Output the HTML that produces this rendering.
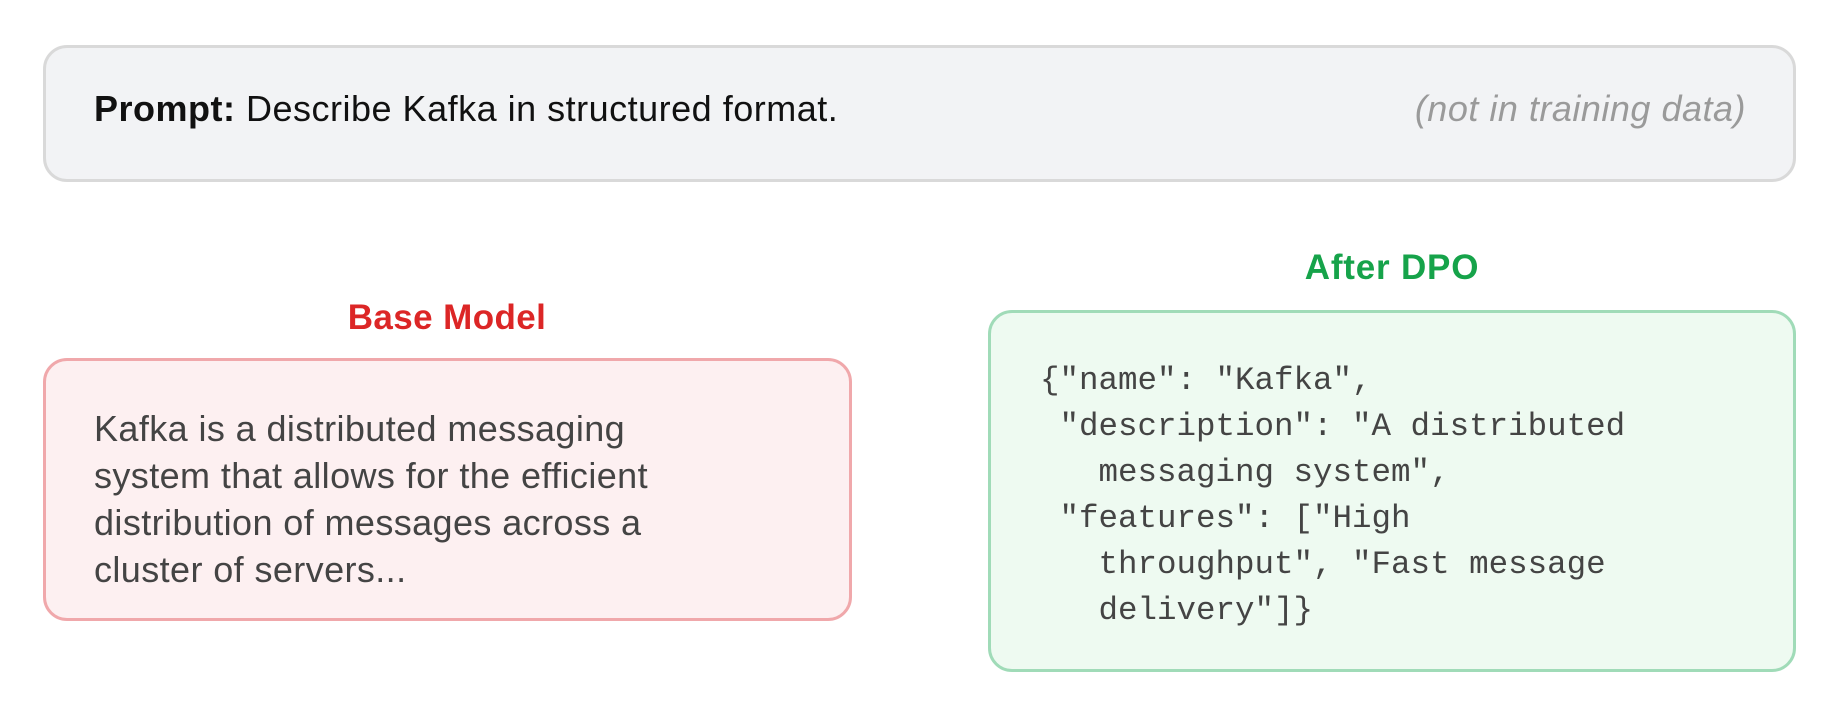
<!DOCTYPE html>
<html><head><meta charset="utf-8"><style>
body{margin:0;width:1841px;height:715px;background:#fff;position:relative;overflow:hidden;font-family:"Liberation Sans",sans-serif}
.box{position:absolute;box-sizing:border-box;border:3px solid;border-radius:24px}
.t{position:absolute;white-space:pre;line-height:1}
</style></head><body>
<div class="box" style="left:43px;top:45px;width:1753px;height:137px;background:#f2f3f5;border-color:#d9d9d9"></div>
<div class="t" style="left:94px;top:91px;font-size:36px;color:#111;letter-spacing:0.5px"><b>Prompt:</b> Describe Kafka in structured format.</div>
<div class="t" style="right:95px;top:91px;font-size:36px;color:#9a9a9a;font-style:italic;letter-spacing:0.5px">(not in training data)</div>

<div class="t" style="left:447px;top:300px;transform:translateX(-50%);font-size:35px;font-weight:bold;color:#dc2626;letter-spacing:0.4px">Base Model</div>
<div class="box" style="left:43px;top:358px;width:809px;height:263px;background:#fdf0f1;border-color:#f0a8ab"></div>
<div class="t" style="left:94px;top:405px;font-size:36px;line-height:47px;color:#444;letter-spacing:0.4px">Kafka is a distributed messaging
system that allows for the efficient
distribution of messages across a
cluster of servers...</div>

<div class="t" style="left:1392px;top:250px;transform:translateX(-50%);font-size:35px;font-weight:bold;color:#16a34a;letter-spacing:0.8px">After DPO</div>
<div class="box" style="left:988px;top:310px;width:808px;height:362px;background:#eefaf1;border-color:#a0dbb8"></div>
<div class="t" style="left:1040px;top:358px;font-family:'Liberation Mono',monospace;font-size:32.5px;line-height:46px;color:#444">{"name": "Kafka",
 "description": "A distributed
   messaging system",
 "features": ["High
   throughput", "Fast message
   delivery"]}</div>
</body></html>
